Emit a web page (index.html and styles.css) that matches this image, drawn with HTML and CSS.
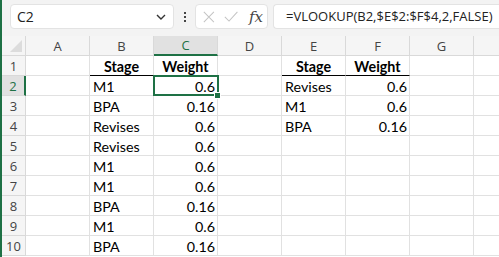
FILE: index.html
```html
<!DOCTYPE html>
<html lang="en">
<head>
    <meta charset="UTF-8">
    <title>Sheet</title>
    <link rel="stylesheet" href="styles.css">
</head>
<body>
<div class="app">
    <div class="toolbar">
        <div class="name-box">
            <span>C2</span>
            <svg class="chev" width="10" height="6" viewBox="0 0 10 6"><path d="M1 1l4 4 4-4" fill="none" stroke="#333" stroke-width="1.4"/></svg>
        </div>
        <div class="dots"><i></i><i></i><i></i></div>
        <div class="fx-buttons">
            <svg width="14" height="14" viewBox="0 0 14 14"><path d="M1 1l12 12M13 1L1 13" stroke="#c4c4c4" stroke-width="1.2" fill="none"/></svg>
            <svg width="17" height="13" viewBox="0 0 17 13"><path d="M1 7l5 5L16 1" stroke="#c4c4c4" stroke-width="1.2" fill="none"/></svg>
            <span class="fx">fx</span>
        </div>
        <div class="formula">=VLOOKUP(B2,$E$2:$F$4,2,FALSE)</div>
    </div>

    <div class="sheet">
        <div class="hd corner"><span class="tri"></span></div>
        <div class="hd col">A</div>
        <div class="hd col">B</div>
        <div class="hd col sel">C</div>
        <div class="hd col">D</div>
        <div class="hd col">E</div>
        <div class="hd col">F</div>
        <div class="hd col">G</div>
        <div class="hd col last"></div>

        <div class="hd row">1</div>
        <div class="c"></div><div class="c th under">Stage</div><div class="c th">Weight</div><div class="c"></div><div class="c th under">Stage</div><div class="c th under">Weight</div><div class="c"></div><div class="c last"></div>

        <div class="hd row sel">2</div>
        <div class="c"></div><div class="c">M1</div><div class="c n active">0.6</div><div class="c"></div><div class="c">Revises</div><div class="c n">0.6</div><div class="c"></div><div class="c last"></div>

        <div class="hd row">3</div>
        <div class="c"></div><div class="c">BPA</div><div class="c n">0.16</div><div class="c"></div><div class="c">M1</div><div class="c n">0.6</div><div class="c"></div><div class="c last"></div>

        <div class="hd row">4</div>
        <div class="c"></div><div class="c">Revises</div><div class="c n">0.6</div><div class="c"></div><div class="c">BPA</div><div class="c n">0.16</div><div class="c"></div><div class="c last"></div>

        <div class="hd row">5</div>
        <div class="c"></div><div class="c">Revises</div><div class="c n">0.6</div><div class="c"></div><div class="c"></div><div class="c"></div><div class="c"></div><div class="c last"></div>

        <div class="hd row">6</div>
        <div class="c"></div><div class="c">M1</div><div class="c n">0.6</div><div class="c"></div><div class="c"></div><div class="c"></div><div class="c"></div><div class="c last"></div>

        <div class="hd row">7</div>
        <div class="c"></div><div class="c">M1</div><div class="c n">0.6</div><div class="c"></div><div class="c"></div><div class="c"></div><div class="c"></div><div class="c last"></div>

        <div class="hd row">8</div>
        <div class="c"></div><div class="c">BPA</div><div class="c n">0.16</div><div class="c"></div><div class="c"></div><div class="c"></div><div class="c"></div><div class="c last"></div>

        <div class="hd row">9</div>
        <div class="c"></div><div class="c">M1</div><div class="c n">0.6</div><div class="c"></div><div class="c"></div><div class="c"></div><div class="c"></div><div class="c last"></div>

        <div class="hd row">10</div>
        <div class="c"></div><div class="c">BPA</div><div class="c n">0.16</div><div class="c"></div><div class="c"></div><div class="c"></div><div class="c"></div><div class="c last"></div>
    </div>
</div>
</body>
</html>
```

FILE: styles.css
```css
body {
    margin: 0;
    background: #fff;
    overflow: hidden;
}
.app {
    border-left: 2px solid #1e7145;
    height: 257px;
    box-sizing: border-box;
    font-family: 'Open Sans', sans-serif;
}
.toolbar {
    height: 36px;
    background: #f3f3f3;
    display: flex;
    align-items: flex-start;
    padding: 4px 0 0 8px;
    box-sizing: border-box;
}
.name-box {
    width: 164px;
    height: 25px;
    box-sizing: border-box;
    background: #fff;
    border: 1px solid #e3e3e3;
    border-radius: 4px;
    display: flex;
    align-items: center;
    justify-content: space-between;
    padding: 0 7px 0 6px;
    font-size: 14px;
    color: #222;
}
.dots {
    width: 21px;
    height: 25px;
    display: flex;
    flex-direction: column;
    align-items: center;
    justify-content: center;
    gap: 2px;
}
.dots i {
    width: 2px;
    height: 2px;
    background: #444;
}
.fx-buttons {
    width: 73px;
    height: 25px;
    box-sizing: border-box;
    background: #fff;
    border: 1px solid #e3e3e3;
    border-radius: 4px;
    display: flex;
    align-items: center;
    padding: 0 4px 0 7px;
    gap: 9px;
}
.fx {
    font-family: 'DejaVu Serif', serif;
    font-style: italic;
    font-size: 15px;
    color: #444;
    margin-left: 2px;
}
.formula {
    flex: 1;
    margin-left: 5px;
    height: 25px;
    box-sizing: border-box;
    background: #fff;
    border: 1px solid #e3e3e3;
    border-right: none;
    border-radius: 4px 0 0 4px;
    padding-left: 12px;
    line-height: 23px;
    font-size: 13px;
    color: #222;
    white-space: nowrap;
}
.sheet {
    display: grid;
    grid-template-columns: 24px repeat(7, 64px) 1fr;
    grid-auto-rows: 20px;
}
.hd {
    background: #f5f5f5;
    color: #444;
    font-size: 13px;
    box-sizing: border-box;
    border-right: 1px solid #d9d9d9;
    border-bottom: 1px solid #d9d9d9;
    display: flex;
    align-items: center;
    justify-content: center;
}
.hd.last {
    border-right: none;
}
.corner {
    position: relative;
}
.tri {
    position: absolute;
    right: 3px;
    bottom: 3px;
    width: 0;
    height: 0;
    border-left: 12px solid transparent;
    border-bottom: 12px solid #dcdcdc;
}
.hd.col.sel {
    background: #e1e1e1;
    color: #1e7145;
    border-bottom: 2px solid #1e7145;
}
.hd.row.sel {
    background: #e1e1e1;
    color: #1e7145;
    border-right: 2px solid #1e7145;
}
.c {
    box-sizing: border-box;
    border-right: 1px solid #e1e1e1;
    border-bottom: 1px solid #e1e1e1;
    font-family: 'Lato', sans-serif;
    font-size: 14.3px;
    color: #000;
    padding: 0 3px;
    line-height: 21px;
    white-space: nowrap;
}
.c.last {
    border-right: none;
}
.c.th {
    font-weight: bold;
    text-align: center;
}
.c.under {
    border-bottom: 1px solid #000;
}
.c.n {
    text-align: right;
    padding-right: 2px;
}
.c.active {
    position: relative;
}
.c.active::before {
    content: "";
    position: absolute;
    left: -1px;
    top: -1px;
    right: -2px;
    bottom: -1px;
    border: 2px solid #1e7145;
}
.c.active::after {
    content: "";
    position: absolute;
    right: -4px;
    bottom: -4px;
    width: 5px;
    height: 5px;
    background: #1e7145;
    border: 1px solid #fff;
}
```
